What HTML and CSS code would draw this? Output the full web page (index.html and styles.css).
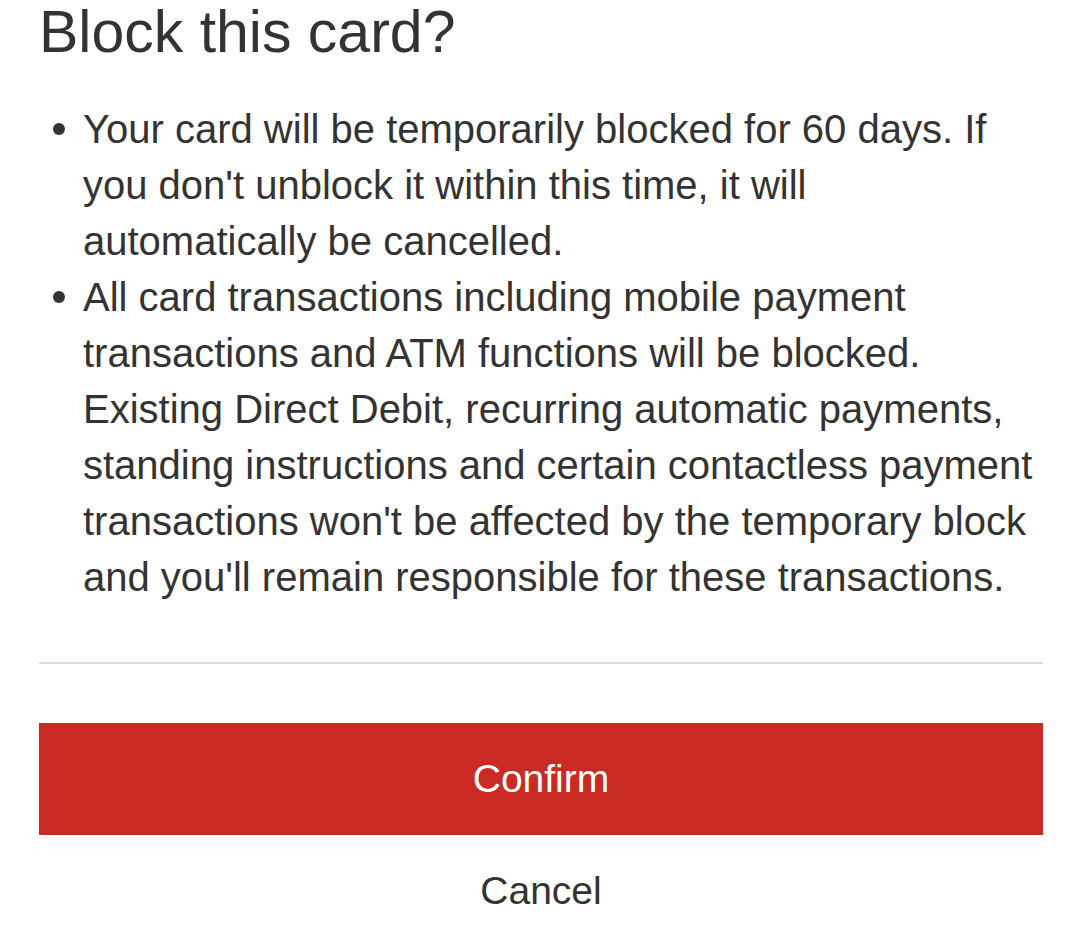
FILE: index.html
```html
<!DOCTYPE html>
<html lang="en">

<head>
	<title>block card</title>
	<meta charset="utf-8" />
	<meta name="viewport" content="width=device-width,initial-scale=1" />
	<link rel="stylesheet" href="styles.css">
</head>

<body>
	<div class="dialog">
		<h2 class="dialog-title">Block this card?</h2>

		<ul class="notes">
			<li>Your card will be temporarily blocked for 60 days. If you don't unblock it within this time, it will automatically be cancelled.</li>
			<li>All card transactions including mobile payment transactions and ATM functions will be blocked. Existing Direct Debit, recurring automatic payments, standing instructions and certain contactless payment transactions won't be affected by the temporary block and you'll remain responsible for these transactions.</li>
		</ul>

		<hr class="divider">

		<div class="actions">
			<button class="btn-confirm">Confirm</button>
			<button class="btn-cancel">Cancel</button>
		</div>
	</div>
</body>

</html>
```

FILE: styles.css
```css
:root {
	--text-color: #333333;
	--red: #c92a24;
	--line: #dcdcdc;
}

*,
*:before,
*:after {
	box-sizing: border-box;
	margin: 0;
	padding: 0;
}

body {
	background: #ffffff;
	color: var(--text-color);
	font-family: "Liberation Sans", Arial, sans-serif;
}

.dialog {
	padding: 0 37px 0 39px;
}

.dialog-title {
	font-size: 59px;
	font-weight: normal;
	line-height: normal;
	margin-top: -2px;
}

.notes {
	list-style: none;
	margin-top: 35px;
	padding-left: 14px;
	font-size: 40px;
	line-height: 56px;
}

.notes li {
	display: flex;
	gap: 18px;
}

.notes li:before {
	content: "";
	flex: 0 0 12px;
	height: 12px;
	margin-top: 22px;
	border-radius: 50%;
	background: var(--text-color);
}

.divider {
	border: 0;
	height: 2px;
	background: var(--line);
	margin-top: 57px;
}

.actions {
	margin-top: 59px;
	display: flex;
	flex-direction: column;
}

.actions button {
	height: 112px;
	border: 0;
	font-family: inherit;
	font-size: 39px;
	cursor: pointer;
}

.btn-confirm {
	background: var(--red);
	color: #ffffff;
}

.btn-cancel {
	background: transparent;
	color: var(--text-color);
}
```
